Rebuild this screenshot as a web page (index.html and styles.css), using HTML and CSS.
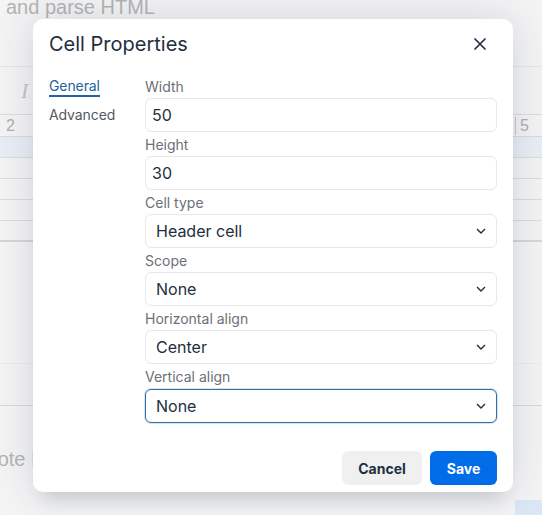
FILE: index.html
```html
<!DOCTYPE html>
<html lang="en">
<head>
<meta charset="utf-8">
<title>Cell Properties</title>
<link rel="stylesheet" href="styles.css">
</head>
<body>
<div class="editor">
  <div class="doc-head"><span class="doc-text">and parse HTML</span></div>
  <div class="toolbar"><span class="tool-i">I</span></div>
  <div class="table">
    <div class="trow thead"><span class="cell-num">2</span><span class="cell-num right">5</span></div>
    <div class="trow sel"></div>
    <div class="trow"></div>
    <div class="trow"></div>
    <div class="trow"></div>
    <div class="trow last"></div>
  </div>
  <div class="spacer"></div>
  <div class="faint-line"></div>
  <div class="dark-line"></div>
  <div class="doc-foot"><span class="doc-text">Quote I</span><span class="blue-block"></span></div>
</div>

<div class="dialog" role="dialog">
  <div class="dlg-header">
    <h1 class="dlg-title">Cell Properties</h1>
    <button class="dlg-close" aria-label="Close">
      <svg width="12" height="12" viewBox="0 0 12 12"><path d="M1 1 L11 11 M11 1 L1 11" stroke="#222f3e" stroke-width="1.7" stroke-linecap="round" fill="none"/></svg>
    </button>
  </div>
  <div class="dlg-body">
    <div class="tabs">
      <div class="tab active">General</div>
      <div class="tab">Advanced</div>
    </div>
    <div class="form">
      <div class="group">
        <label class="lbl">Width</label>
        <div class="input">50</div>
      </div>
      <div class="group">
        <label class="lbl">Height</label>
        <div class="input">30</div>
      </div>
      <div class="group">
        <label class="lbl">Cell type</label>
        <div class="select"><span>Header cell</span><svg class="chev" width="10" height="6" viewBox="0 0 10 6"><path d="M1 1 L5 5 L9 1" stroke="#222f3e" stroke-width="1.4" fill="none"/></svg></div>
      </div>
      <div class="group">
        <label class="lbl">Scope</label>
        <div class="select"><span>None</span><svg class="chev" width="10" height="6" viewBox="0 0 10 6"><path d="M1 1 L5 5 L9 1" stroke="#222f3e" stroke-width="1.4" fill="none"/></svg></div>
      </div>
      <div class="group">
        <label class="lbl">Horizontal align</label>
        <div class="select"><span>Center</span><svg class="chev" width="10" height="6" viewBox="0 0 10 6"><path d="M1 1 L5 5 L9 1" stroke="#222f3e" stroke-width="1.4" fill="none"/></svg></div>
      </div>
      <div class="group">
        <label class="lbl">Vertical align</label>
        <div class="select focus"><span>None</span><svg class="chev" width="10" height="6" viewBox="0 0 10 6"><path d="M1 1 L5 5 L9 1" stroke="#222f3e" stroke-width="1.4" fill="none"/></svg></div>
      </div>
    </div>
  </div>
  <div class="dlg-footer">
    <button class="btn cancel">Cancel</button>
    <button class="btn save">Save</button>
  </div>
</div>
</body>
</html>
```
FILE: styles.css
```css
* { box-sizing: border-box; }
html, body { margin: 0; padding: 0; }
body {
  width: 542px;
  height: 515px;
  overflow: hidden;
  background: #f4f4f5;
  font-family: Inter, "Noto Sans", "Liberation Sans", sans-serif;
  position: relative;
}

/* background editor (faded) */
.editor { width: 542px; height: 515px; display: flex; flex-direction: column; }
.doc-head { height: 67px; border-bottom: 1px solid #e6e6e8; }
.doc-text {
  display: block;
  font-family: "Liberation Sans", Arial, sans-serif;
  font-size: 20px;
  line-height: 20px;
  color: #b4b4b6;
  margin-top: -3px;
  padding-left: 6px;
}
.toolbar { height: 47px; padding-left: 21px; display: flex; align-items: center; }
.tool-i { font-family: "Liberation Serif", serif; font-style: italic; font-size: 22px; color: #c4c4c6; }
.table { border-top: 1px solid #dcdcde; }
.trow { height: 21px; border-bottom: 1px solid #dcdcde; display: flex; justify-content: space-between; align-items: center; padding: 0 13px 0 6px; }
.trow.thead { height: 22px; }
.trow.sel { background: #e9eef6; }
.trow.last { border-bottom: 2px solid #d6d6d8; }
.cell-num { font-family: "Liberation Sans", Arial, sans-serif; font-size: 16px; color: #b0b0b2; }
.cell-num.right { border-left: 1px solid #c8c8ca; padding-left: 4px; }
.spacer { height: 121px; }
.faint-line { height: 1px; background: #ececee; }
.dark-line { height: 1px; margin-top: 41px; background: #d8d8da; }
.doc-foot { flex: 1; display: flex; justify-content: space-between; position: relative; }
.doc-foot .doc-text { margin-top: 43px; margin-left: -35px; }
.blue-block { align-self: flex-end; width: 27px; height: 15px; background: #dbe7f7; }

/* dialog */
.dialog {
  position: absolute;
  left: 33px;
  top: 19px;
  width: 480px;
  height: 473px;
  background: #fff;
  border-radius: 10px;
  box-shadow: 0 16px 16px -10px rgba(34,47,62,.15), 0 0 40px 1px rgba(34,47,62,.15);
  display: flex;
  flex-direction: column;
  color: #222f3e;
}
.dlg-header {
  display: flex;
  justify-content: space-between;
  align-items: center;
  padding: 11px 16px 0 16px;
}
.dlg-title { margin: 0; font-size: 20px; font-weight: 400; line-height: 28px; color: #222f3e; }
.dlg-close {
  width: 34px; height: 28px; border: 0; background: transparent; padding: 0;
  display: flex; align-items: center; justify-content: center;
}
.dlg-body { display: flex; padding: 20px 16px 0 16px; }
.tabs { width: 96px; flex-shrink: 0; display: flex; flex-direction: column; align-items: flex-start; margin-top: -1px; }
.tab {
  font-size: 14px; line-height: 18px; color: #525a63; letter-spacing: -0.1px;
  border-bottom: 2px solid transparent; margin-bottom: 9px;
}
.tab.active { color: #21649e; border-bottom-color: #21649e; }
.form { flex: 1; display: flex; flex-direction: column; gap: 4px; }
.group { display: flex; flex-direction: column; }
.lbl { font-size: 14px; line-height: 18px; color: #6b7079; margin-bottom: 2px; }
.input, .select {
  height: 34px;
  border: 1px solid #e8e8e8;
  border-radius: 6px;
  font-size: 16px;
  line-height: 32px;
  color: #222f3e;
  background: #fff;
}
.input { padding-left: 6px; }
.select { padding: 0 10px 0 10px; display: flex; justify-content: space-between; align-items: center; }
.select.focus { margin-top: 1px; border-color: #3a6d9a; box-shadow: 0 0 0 1px rgba(0,108,231,.18); }
.chev { width: 10px; height: 6px; }
.dlg-footer { margin-top: auto; display: flex; justify-content: flex-end; gap: 8px; padding: 0 16px 7px 16px; }
.btn {
  height: 34px; border: 0; border-radius: 6px; font-family: inherit;
  font-size: 14px; font-weight: 700; padding: 0 16px;
}
.cancel { background: #f0f0f0; color: #222f3e; width: 80px; }
.save { background: #006ce7; color: #fff; width: 67px; }
```
